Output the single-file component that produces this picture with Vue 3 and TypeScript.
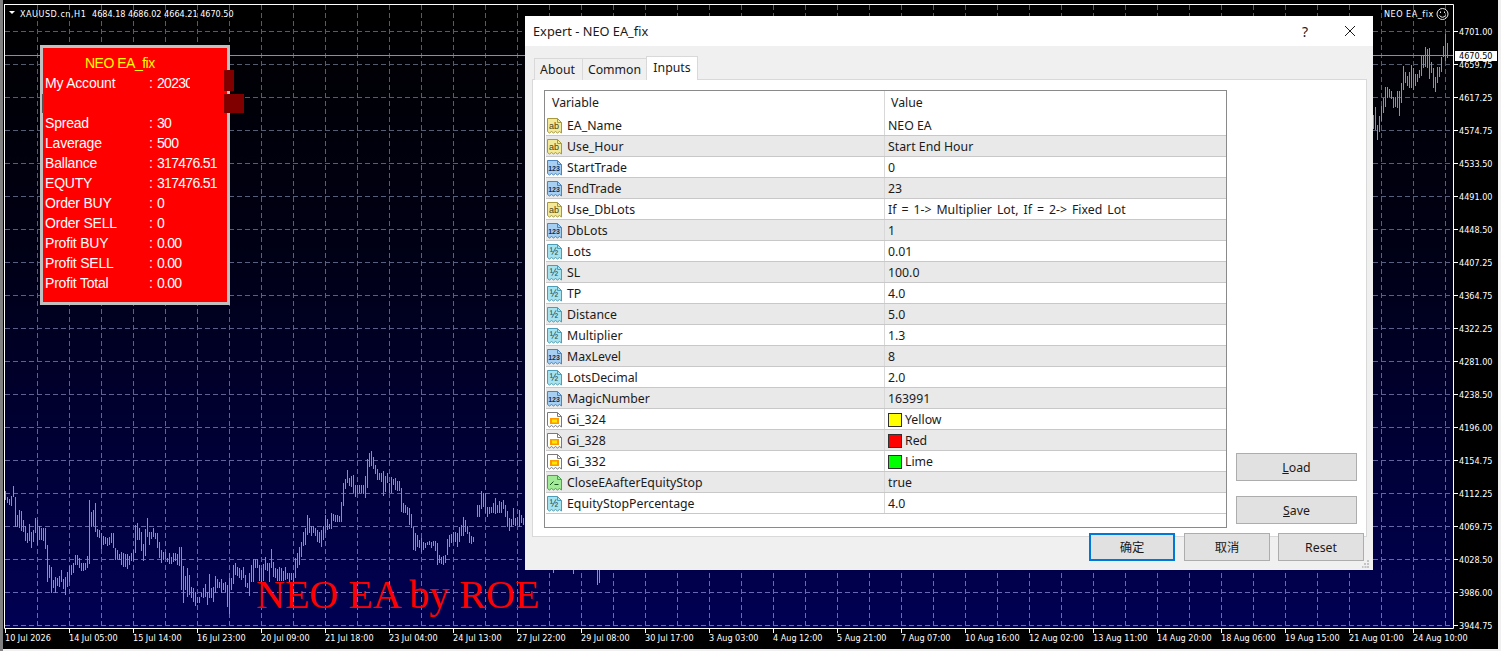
<script setup lang="ts">
type Kind = "str" | "int" | "dbl" | "clr" | "bool";

interface InputRow {
  name: string;
  kind: Kind;
  value: string;
  swatch?: string;
  wide?: boolean;
}

type Bar = [number, number];

const CHART_LEFT = 5;
const CHART_RIGHT = 1453;
const CHART_TOP = 5;
const CHART_BOTTOM = 628;

const priceLabels = [
  "4701.00", "4659.75", "4617.25", "4574.75", "4533.50", "4491.00", "4448.50",
  "4407.25", "4364.75", "4322.25", "4281.00", "4238.50", "4196.00", "4154.75",
  "4112.25", "4069.75", "4028.50", "3986.00", "3944.75",
];

const timeLabels = [
  "10 Jul 2026", "14 Jul 05:00", "15 Jul 14:00", "16 Jul 23:00", "20 Jul 09:00",
  "21 Jul 18:00", "23 Jul 04:00", "24 Jul 13:00", "27 Jul 22:00", "29 Jul 08:00",
  "30 Jul 17:00", "3 Aug 03:00", "4 Aug 12:00", "5 Aug 21:00", "7 Aug 07:00",
  "10 Aug 16:00", "12 Aug 02:00", "13 Aug 11:00", "14 Aug 20:00", "18 Aug 06:00",
  "19 Aug 15:00", "21 Aug 01:00", "24 Aug 10:00",
];

// tops and bottoms read off the 3x crops, so they stay in crop units
const barsFrom5: Bar[] = [
  [122,150],[140,160],[148,165],[138,168],[108,140],[140,232],[195,232],[180,235],[183,242],[210,245],
  [228,272],[250,278],[222,272],[245,293],[240,275],[205,250],[210,285],[228,270],[235,270],[233,272],
  [233,296],[285,395],[345,385],[352,428],[390,415],[380,428],[385,408],[378,410],[360,395],[388,418],
  [380,435],[365,412],[348,395],[345,375],[338,368],[315,345],[315,345],[325,355],[338,362],[338,362],
  [338,360],[318,355],[150,342],[185,230],[180,228],[160,245],[238,262],[240,265],[248,298],[258,285],
  [260,283],[265,288],[262,285],[250,278],[248,295],[295,330],[300,328],[312,330],[305,345],[310,350],
  [312,352],[312,356],[318,345],[310,332],[300,332],[225,310],[218,270],[235,270],[245,302],[282,332],
  [238,318],[204,262],[245,286],[245,268],[235,262],[248,268],[250,295],[275,325],[300,340],[305,330],
  [305,328],[325,335],[310,342],[320,342],[310,335],[308,332],[312,345],[292,348],[290,420],[348,458],
  [378,420],[355,440],[375,435],[410,445],[415,455],[425,468],[440,460],[440,458],[430,442],[415,445],
  [402,440],[425,465],[372,445],[415,445],[412,456],[378,430],[388,415],[395,415],[388,428],[398,420],
  [395,425],[405,470],[385,492],[385,420],[345,402],[340,375],[350,378],[355,385],[360,390],[350,385],
  [375,410],[400,415],[370,438],[345,395],[328,395],[328,355],[328,355],[345,392],[355,395],[342,392],
  [322,360],[338,362],[340,395],[297,355],[335,380],[355,385],[358,392],[350,392],[355,392],[362,392],
  [350,390],[370,388],[370,395],[368,390],[368,395],[325,385],[310,355],[290,345],[275,320],[245,288],
  [235,285],[195,255],[205,248],[228,258],[228,250],[235,258],[240,275],[245,278],[240,290],[228,270],
  [195,250],[208,240],[222,238],[190,238],[192,212],[195,215],[195,215],[198,215],[155,215],[100,168],
  [88,118],[60,100],[85,108],[78,112],[75,130],[105,140],[105,132],[105,130],[105,128],[105,132],
  [78,143],[28,115],[8,50],[3,48],[20,58],[45,72],[58,90],[70,90],[70,95],[62,137],
  [78,125],[70,100],[100,130],[80,130],[88,105],[85,120],[92,122],[92,122],[113,185],[158,190],
  [165,190],[170,195],[175,225],[192,235],[232,300],[250,302],[255,290],[270,295],[265,305],[275,300],
  [280,295],[275,285],[273,285],[275,295],[272,288],[272,302],[278,345],[315,338],[322,342],[318,345],
  [315,340],[268,315],[255,290],[252,280],[245,275],[245,275],[250,290],[230,275],[225,258],[202,258],
  [210,245],[228,252],[245,278],[258,282],[262,276],
];

const barsFrom477: Bar[] = [
  [165,202],[165,200],[122,178],[130,170],[130,190],[170,200],[172,192],[170,190],[158,190],[145,192],
  [165,190],[152,190],[155,190],[150,178],[165,200],[182,230],[205,242],[208,230],[175,225],[205,228],
  [200,225],[180,230],[195,218],[205,225],[215,232],
];

const barsFrom1373: Bar[] = [
  [345,388],[320,390],[375,420],[348,395],[318,362],[295,340],[262,320],[262,295],[268,290],[272,298],
  [292,325],[292,320],[272,325],[272,348],[250,310],[197,270],[215,250],[228,258],[215,265],[195,265],
  [205,270],[222,258],[222,245],[210,235],[168,228],[168,205],[142,200],[148,205],[145,238],[185,218],
  [205,265],[230,275],[202,248],[202,230],[172,215],[138,172],[103,182],[130,175],
];

function barPath(startX: number, offsetY: number, bars: Bar[]): string {
  return bars
    .map(([top, bottom], i) => {
      const x = startX + i * 2 + 0.5;
      return `M${x} ${Math.round(offsetY + top / 3)}V${Math.round(offsetY + bottom / 3)}`;
    })
    .join("");
}

const barsPath = [
  barPath(5, 450, barsFrom5),
  barPath(477, 450, barsFrom477),
  barPath(1373, 0, barsFrom1373),
  "M553.5 570V573M573.5 570V574M597.5 570V585M599.5 570V583",
].join("");

const gridX: number[] = [];
for (let x = 37; x < CHART_RIGHT; x += 32) gridX.push(x + 0.5);

const priceTicks = priceLabels.map((label, i) => ({ label, y: 31 + i * 33 }));
const timeTicks = timeLabels.map((label, i) => ({ label, x: 5 + i * 64 }));

const accountRows = [
  { label: "My Account", value: "20230", clipped: true },
  { label: "", value: "" },
  { label: "Spread", value: "30" },
  { label: "Laverage", value: "500" },
  { label: "Ballance", value: "317476.51" },
  { label: "EQUTY", value: "317476.51" },
  { label: "Order BUY", value: "0" },
  { label: "Order SELL", value: "0" },
  { label: "Profit BUY", value: "0.00" },
  { label: "Profit SELL", value: "0.00" },
  { label: "Profit Total", value: "0.00" },
];

const inputs: InputRow[] = [
  { name: "EA_Name", kind: "str", value: "NEO EA" },
  { name: "Use_Hour", kind: "str", value: "Start End Hour" },
  { name: "StartTrade", kind: "int", value: "0" },
  { name: "EndTrade", kind: "int", value: "23" },
  { name: "Use_DbLots", kind: "str", value: "If = 1-> Multiplier Lot, If = 2-> Fixed Lot", wide: true },
  { name: "DbLots", kind: "int", value: "1" },
  { name: "Lots", kind: "dbl", value: "0.01" },
  { name: "SL", kind: "dbl", value: "100.0" },
  { name: "TP", kind: "dbl", value: "4.0" },
  { name: "Distance", kind: "dbl", value: "5.0" },
  { name: "Multiplier", kind: "dbl", value: "1.3" },
  { name: "MaxLevel", kind: "int", value: "8" },
  { name: "LotsDecimal", kind: "dbl", value: "2.0" },
  { name: "MagicNumber", kind: "int", value: "163991" },
  { name: "Gi_324", kind: "clr", value: "Yellow", swatch: "#ffff00" },
  { name: "Gi_328", kind: "clr", value: "Red", swatch: "#ff0000" },
  { name: "Gi_332", kind: "clr", value: "Lime", swatch: "#00ff00" },
  { name: "CloseEAafterEquityStop", kind: "bool", value: "true" },
  { name: "EquityStopPercentage", kind: "dbl", value: "4.0" },
];

const iconText: Record<Kind, string> = {
  str: "ab",
  int: "123",
  dbl: "½",
  clr: "",
  bool: "",
};
</script>

<template>
  <div class="terminal">
    <svg class="chart" width="1501" height="651" viewBox="0 0 1501 651">
      <defs>
        <linearGradient id="sky" x1="0" y1="0" x2="0" y2="1">
          <stop offset="0" stop-color="#000000" />
          <stop offset="0.4" stop-color="#000016" />
          <stop offset="1" stop-color="#000054" />
        </linearGradient>
        <linearGradient id="gridInk" gradientUnits="userSpaceOnUse" x1="0" y1="0" x2="0" y2="628">
          <stop offset="0" stop-color="#525c68" />
          <stop offset="0.5" stop-color="#5a6086" />
          <stop offset="1" stop-color="#6a6abc" />
        </linearGradient>
      </defs>

      <rect :x="CHART_LEFT" :y="CHART_TOP" :width="CHART_RIGHT - CHART_LEFT" :height="CHART_BOTTOM - CHART_TOP" fill="url(#sky)" />

      <g stroke="url(#gridInk)" stroke-dasharray="5 3" fill="none">
        <path v-for="x in gridX" :key="x" :d="`M${x} ${CHART_TOP}V${CHART_BOTTOM}`" />
        <path v-for="t in priceTicks" :key="t.y" :d="`M${CHART_LEFT} ${t.y + 0.5}H${CHART_RIGHT}`" />
      </g>

      <path class="bars" :d="barsPath" />
      <path class="price-line" d="M5 55.5H1453" />

      <text class="watermark" x="256" y="608">NEO EA by ROE</text>

      <g class="frame">
        <path d="M4.5 4V628.5H1453.5V4.5H4" />
        <path v-for="t in priceTicks" :key="t.y" :d="`M1454 ${t.y + 0.5}H1458`" />
        <path v-for="t in timeTicks" :key="t.x" :d="`M${t.x + 0.5} 629V633`" />
      </g>

      <text v-for="t in priceTicks" :key="t.label" class="axis" x="1459" :y="t.y + 4">{{ t.label }}</text>
      <text v-for="t in timeTicks" :key="t.label" class="axis" :x="t.x" y="641">{{ t.label }}</text>

      <rect x="1455" y="51" width="42" height="10" fill="#ffffff" />
      <text class="axis axis--dark" x="1459" y="59">4670.50</text>

      <path d="M9 11H15L12 14Z" fill="#ffffff" />
      <text class="axis axis--spaced" x="20" y="17">XAUUSD.cn,H1</text>
      <text class="axis" x="92" y="17">4684.18 4686.02 4664.21 4670.50</text>

      <text class="axis axis--spaced" x="1384" y="17">NEO EA_fix</text>
      <g class="smiley">
        <circle cx="1442.5" cy="14" r="5.5" />
        <path d="M1439.5 15.5Q1442.5 19 1445.5 15.5" />
        <path d="M1440.5 11.5V13M1444.5 11.5V13" />
      </g>
    </svg>

    <div class="account">
      <div class="account__title">NEO EA_fix</div>
      <div v-for="(row, i) in accountRows" :key="i" class="account__row">
        <template v-if="row.label">
          <span class="account__label">{{ row.label }}</span>
          <span class="account__colon">:</span>
          <span :class="['account__value', { 'account__value--clipped': row.clipped }]">{{ row.value }}</span>
        </template>
      </div>
      <span class="account__edit account__edit--login"></span>
      <span class="account__edit account__edit--server"></span>
      <span class="account__notch"></span>
    </div>

    <div class="dialog">
      <header class="dialog__title">
        <span>Expert - NEO EA_fix</span>
        <span class="dialog__help">?</span>
        <svg class="dialog__close" width="12" height="12" viewBox="0 0 12 12">
          <path d="M1 1L11 11M11 1L1 11" stroke="#1a1a1a" fill="none" />
        </svg>
      </header>

      <div class="tabs">
        <span class="tab tab--about">About</span>
        <span class="tab tab--common">Common</span>
        <span class="tab tab--active">Inputs</span>
      </div>

      <section class="sheet">
        <div class="grid">
          <div class="grid__row grid__row--head">
            <span class="grid__name">Variable</span>
            <span class="grid__value">Value</span>
          </div>
          <div v-for="row in inputs" :key="row.name" class="grid__row">
            <span class="grid__name">
              <svg :class="['type-icon', `type-icon--${row.kind}`]" width="17" height="18" viewBox="0 0 17 18">
                <path class="type-icon__page" d="M1.500 1.500H11.500L15.500 5.500V16L13.500 14.500L11.500 16L9.500 14.500L7.500 16L5.500 14.500L3.500 16L1.500 14.500Z" />
                <path class="type-icon__fold" d="M11.500 1.500V5.500H15.500" />
                <text v-if="iconText[row.kind]" class="type-icon__text" x="8" y="11.500">{{ iconText[row.kind] }}</text>
                <g v-if="row.kind === 'clr'">
                  <rect x="4" y="7" width="9" height="6" fill="#ff9800" />
                  <rect x="6" y="8.500" width="5" height="3" fill="#ffe800" />
                </g>
                <path v-if="row.kind === 'bool'" d="M4 11L7.500 7.500M8.500 10.500H12.500" stroke="#14541a" fill="none" />
              </svg>
              {{ row.name }}
            </span>
            <span :class="['grid__value', { 'grid__value--wide': row.wide }]">
              <i v-if="row.swatch" class="swatch" :style="{ background: row.swatch }"></i>
              {{ row.value }}
            </span>
          </div>
        </div>

        <div class="side-buttons">
          <button class="btn btn--side"><u>L</u>oad</button>
          <button class="btn btn--side"><u>S</u>ave</button>
        </div>
      </section>

      <footer class="dialog__footer">
        <button class="btn btn--default">确定</button>
        <button class="btn">取消</button>
        <button class="btn">Reset</button>
      </footer>

      <svg class="grip" width="8" height="8" viewBox="0 0 8 8">
        <path d="M5 0h2v2H5zM2 3h2v2H2zM5 3h2v2H5zM0 6h1.500v2H0zM2.500 6h2v2h-2zM5 6h2v2H5z" fill="#c4c4c4" />
      </svg>
    </div>
  </div>
</template>

<style>
html,
body {
  margin: 0;
  background: #000000;
}
</style>

<style scoped>
.terminal {
  position: relative;
  width: 1501px;
  height: 651px;
  overflow: hidden;
  background: #000000;
  border-left: 3px solid #808080;
  box-sizing: border-box;
}

.terminal::before {
  content: "";
  position: absolute;
  left: 0;
  right: 0;
  bottom: 0;
  height: 2px;
  background: #f0f0f0;
  z-index: 1;
}

.terminal::after {
  content: "";
  position: absolute;
  right: 0;
  top: 0;
  bottom: 0;
  width: 3px;
  background: #f0f0f0;
}

.chart {
  position: absolute;
  left: -3px;
  top: 0;
  display: block;
}

.bars {
  fill: none;
  stroke: #22e022;
}

.price-line {
  stroke: #8a9099;
  fill: none;
}

.frame path {
  fill: none;
  stroke: #ffffff;
}

.axis {
  font-family: "DejaVu Sans Condensed", "Liberation Sans", sans-serif;
  font-size: 9px;
  fill: #ffffff;
}

.axis--dark {
  fill: #000000;
}

.axis--spaced {
  letter-spacing: 0.5px;
}

.watermark {
  font-family: "Liberation Serif", serif;
  font-size: 40px;
  fill: #ff0000;
}

.smiley circle,
.smiley path {
  fill: none;
  stroke: #e8e8e8;
}

.account {
  position: absolute;
  left: 37px;
  top: 45px;
  width: 190px;
  height: 260px;
  box-sizing: border-box;
  padding: 5px 0 0 2px;
  border: 3px solid #c0c0c0;
  background: #ff0000;
  color: #ffffff;
  font-family: "Liberation Sans", sans-serif;
  font-size: 14px;
  line-height: 20px;
}

.account__title {
  padding-left: 40px;
  color: #ffff00;
  letter-spacing: -0.5px;
}

.account__row {
  display: flex;
  height: 20px;
}

.account__label {
  width: 104px;
  letter-spacing: -0.2px;
}

.account__colon {
  width: 8px;
}

.account__value {
  letter-spacing: -0.7px;
}

.account__value--clipped {
  width: 33px;
  overflow: hidden;
}

.account__edit {
  position: absolute;
  left: 181px;
  background: #800000;
}

.account__edit--login {
  top: 22px;
  width: 10px;
  height: 21px;
}

.account__edit--server {
  top: 46px;
  width: 20px;
  height: 19px;
}

.account__notch {
  position: absolute;
  left: -1px;
  top: 46px;
  width: 2px;
  height: 19px;
  background: #555555;
}

.dialog {
  position: absolute;
  left: 522px;
  top: 16px;
  width: 848px;
  height: 554px;
  display: flex;
  flex-direction: column;
  background: #f0f0f0;
  color: #1a1a1a;
  font-family: "Noto Sans", sans-serif;
  font-size: 12.3px;
}

.dialog__title {
  flex: none;
  height: 30px;
  display: flex;
  align-items: center;
  padding: 0 17px 0 8px;
  background: #ffffff;
  font-size: 12.8px;
}

.dialog__help {
  margin-left: auto;
  font-size: 14px;
}

.dialog__close {
  margin-left: 36px;
}

.tabs {
  flex: none;
  display: flex;
  align-items: flex-end;
  height: 34px;
  padding-left: 9px;
  margin-bottom: -1px;
  position: relative;
  z-index: 1;
}

.tab {
  height: 21px;
  display: flex;
  align-items: center;
  justify-content: center;
  margin-right: -1px;
  border: 1px solid #d9d9d9;
  border-bottom: none;
  background: #f0f0f0;
}

.tab--about {
  width: 45px;
  padding-right: 2px;
}

.tab--common {
  width: 63px;
}

.tab--active {
  width: 50px;
  height: 20px;
  padding-bottom: 3px;
  background: #ffffff;
}

.sheet {
  flex: none;
  position: relative;
  display: flex;
  align-items: flex-start;
  margin: 0 6px 0 7px;
  width: 835px;
  height: 458px;
  box-sizing: border-box;
  padding: 10px 0 0 11px;
  border: 1px solid #d9d9d9;
  background: #ffffff;
}

.grid {
  flex: none;
  width: 683px;
  height: 438px;
  box-sizing: border-box;
  padding: 0 0 0 1px;
  border: 1px solid #8a8a8a;
}

.grid__row {
  display: flex;
  height: 19px;
  padding-top: 1px;
  border-bottom: 1px solid #c8c8c8;
  line-height: 19px;
  white-space: nowrap;
}

.grid__row:nth-child(odd) {
  background: #e9e9e9;
}

.grid__row--head {
  height: 24px;
  padding-top: 0;
  line-height: 24px;
  border-bottom: none;
  background: #ffffff !important;
}

.grid__name {
  width: 338px;
  display: flex;
  align-items: center;
  gap: 4px;
  flex: none;
  margin-top: -1px;
  padding-top: 1px;
  border-right: 1px solid #d8d8d8;
}

.grid__row--head .grid__name {
  padding-left: 6px;
  width: 332px;
  margin-top: 0;
  padding-top: 0;
  align-items: flex-start;
}

.grid__value {
  display: flex;
  align-items: center;
  gap: 3px;
  padding-left: 3px;
}

.grid__value--wide {
  word-spacing: 1.8px;
}

.grid__row--head .grid__value {
  padding-left: 6px;
  align-items: flex-start;
}

.type-icon {
  flex: none;
  margin-top: 1px;
}

.type-icon__page {
  stroke-width: 1;
}

.type-icon__fold {
  fill: none;
  stroke-width: 1;
}

.type-icon__text {
  font-family: "Liberation Sans", sans-serif;
  font-size: 9px;
  text-anchor: middle;
}

.type-icon--str .type-icon__page { fill: #f3e99a; stroke: #a8983e; }
.type-icon--str .type-icon__fold { stroke: #a8983e; }
.type-icon--str .type-icon__text { fill: #4a4210; }
.type-icon--int .type-icon__page { fill: #a6cff2; stroke: #4d84bc; }
.type-icon--int .type-icon__fold { stroke: #4d84bc; }
.type-icon--int .type-icon__text { fill: #0f3056; font-size: 7px; font-weight: 700; }
.type-icon--dbl .type-icon__page { fill: #a8e2ee; stroke: #4c9db5; }
.type-icon--dbl .type-icon__fold { stroke: #4c9db5; }
.type-icon--dbl .type-icon__text { fill: #10424f; font-size: 10px; }
.type-icon--clr .type-icon__page { fill: #ffffff; stroke: #7a7a7a; }
.type-icon--clr .type-icon__fold { stroke: #7a7a7a; }
.type-icon--bool .type-icon__page { fill: #a2ea98; stroke: #4ea054; }
.type-icon--bool .type-icon__fold { stroke: #4ea054; }

.swatch {
  width: 14px;
  height: 14px;
  box-sizing: border-box;
  border: 1px solid #303030;
}

.side-buttons {
  flex: none;
  display: flex;
  flex-direction: column;
  gap: 15px;
  margin: 363px 0 0 9px;
}

.btn {
  width: 86px;
  height: 28px;
  box-sizing: border-box;
  padding: 0;
  border: 1px solid #adadad;
  background: #e1e1e1;
  color: #1a1a1a;
  font-family: "Noto Sans", "Noto Sans CJK SC", sans-serif;
  font-size: 12.3px;
}

.btn--side {
  width: 121px;
}

.btn--default {
  border: 2px solid #0078d7;
  margin-right: 1px;
}

.dialog__footer {
  flex: none;
  display: flex;
  justify-content: flex-end;
  gap: 8px;
  margin-top: -4px;
  padding-right: 9px;
  position: relative;
}

.grip {
  position: absolute;
  right: 3px;
  bottom: 2px;
}
</style>
